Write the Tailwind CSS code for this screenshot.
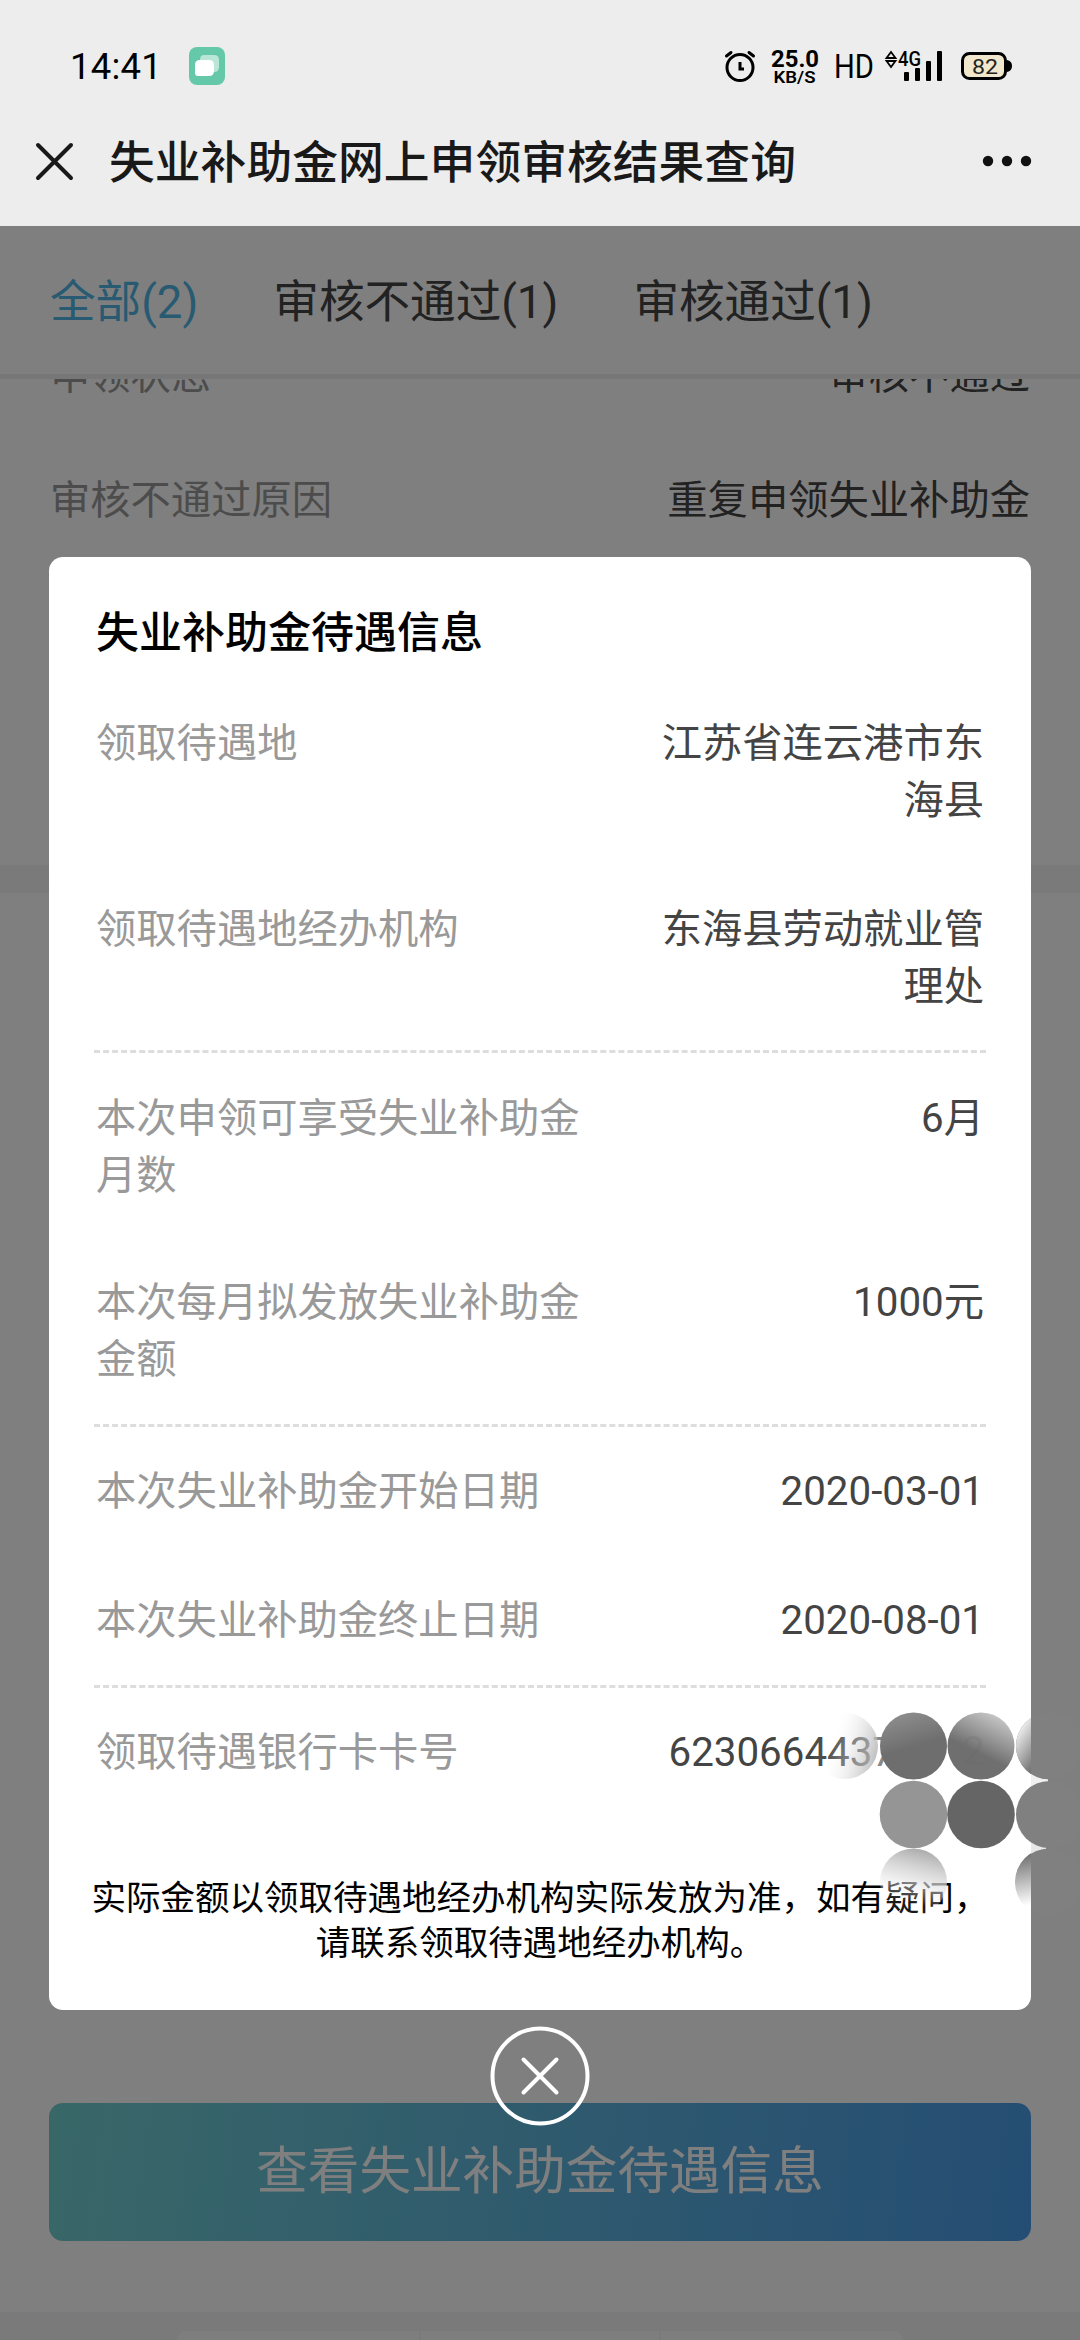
<!DOCTYPE html>
<html lang="zh-CN">
<head>
    <meta charset="UTF-8">
    <meta name="viewport" content="width=device-width, initial-scale=1.0">
    <title>失业补助金网上申领审核结果查询</title>
    <script src="https://cdn.jsdelivr.net/npm/@tailwindcss/browser@4"></script>
</head>
<body class="bg-white font-[Roboto,'Noto_Sans_CJK_SC',sans-serif]">
    <div class="w-[1080px] h-[2340px] flex flex-col overflow-hidden">
        <!-- Status bar + title bar -->
        <header class="h-[226px] shrink-0 bg-[#ededed]">
            <div class="h-[98px] pt-[34px] pl-[70px] pr-[64px] flex items-center justify-between">
                <div class="flex items-center">
                    <span class="w-[119px] pt-[2px] text-[36.5px] leading-[48px] tracking-[0.2px] text-black">14:41</span>
                    <svg class="w-[36px] h-[38px]" viewBox="0 0 36 38">
                        <rect width="36" height="38" rx="8" fill="#65c9a9"/>
                        <path d="M15 8h10q5 0 5 5v7q0 5-5 5H15q-4 0-4-4v-8q0-5 4-5z" fill="#b9e6d6"/>
                        <path d="M11 13h9q5 0 5 5v6q0 5-5 5H9q-3 0-3-3v-8q0-5 5-5z" fill="#fff"/>
                    </svg>
                </div>
                <svg class="w-[292px] h-[42px]" viewBox="724 45 292 42">
                    <g fill="none" stroke="#000" stroke-width="3" stroke-linecap="round">
                        <circle cx="740" cy="67.500" r="13"/>
                        <path d="M726.500 56l4.500-3.500M753.500 56l-4.500-3.500"/>
                        <path d="M740 62v7h4" stroke-linecap="butt"/>
                    </g>
                    <text x="771" y="66.500" font-size="24" font-weight="700" textLength="48" lengthAdjust="spacingAndGlyphs">25.0</text>
                    <text x="773.500" y="83" font-size="17" font-weight="600" textLength="42" lengthAdjust="spacingAndGlyphs">KB/S</text>
                    <text x="834" y="78" font-size="33" textLength="40" lengthAdjust="spacingAndGlyphs">HD</text>
                    <path d="M886.500 58h9l-4.500-6zM886.500 61h9l-4.500 6z" fill="none" stroke="#000" stroke-width="1.800"/>
                    <text x="898" y="66" font-size="20" font-weight="500" textLength="23" lengthAdjust="spacingAndGlyphs">4G</text>
                    <rect x="904" y="72" width="5" height="9" rx="1"/>
                    <rect x="915" y="68" width="5" height="13" rx="1"/>
                    <rect x="926" y="61" width="5" height="20" rx="1"/>
                    <rect x="937" y="51" width="5" height="30" rx="1"/>
                    <rect x="962.500" y="53.500" width="43" height="25" rx="7" fill="#f1e7cd" stroke="#000" stroke-width="3"/>
                    <path d="M1007 60q5 1 5 6t-5 6z"/>
                    <text x="972" y="73.500" font-size="21" textLength="26" lengthAdjust="spacingAndGlyphs" fill="#222">82</text>
                </svg>
            </div>
            <div class="h-[128px] pl-[34px] pr-[48px] pb-[3px] flex items-center">
                <svg class="w-[41px] h-[40px]" viewBox="0 0 41 40" fill="none" stroke="#191919" stroke-width="4" stroke-linecap="round">
                    <path d="M4 4l33 33M37 4L4 37"/>
                </svg>
                <h1 class="ml-[34px] pt-[7px] grow text-[45.8px] leading-[60px] font-medium text-[#191919]">失业补助金网上申领审核结果查询</h1>
                <svg class="w-[50px] h-[12px]" viewBox="0 0 50 12" fill="#111">
                    <circle cx="6" cy="6" r="5.200"/>
                    <circle cx="25" cy="6" r="5.200"/>
                    <circle cx="44" cy="6" r="5.200"/>
                </svg>
            </div>
        </header>

        <main class="relative grow flex flex-col bg-white">
            <nav class="h-[153px] shrink-0 border-b-[5px] border-[#eee] px-[50px] pt-[6px] flex items-center gap-[75px] text-[45.6px] leading-[60px] text-[#444]">
                <span class="text-[#50b4e4]">全部(2)</span>
                <span>审核不通过(1)</span>
                <span>审核通过(1)</span>
            </nav>
            <section class="h-[486px] shrink-0 overflow-hidden px-[50px] text-[40.3px] text-[#444]">
                <div class="-mt-[65px] h-[125px] flex items-center justify-between">
                    <span class="text-[#999]">申领状态</span>
                    <span>审核不通过</span>
                </div>
                <div class="h-[125px] flex items-center justify-between">
                    <span class="text-[#999]">审核不通过原因</span>
                    <span>重复申领失业补助金</span>
                </div>
            </section>
            <div class="h-[28px] shrink-0 bg-[#f4f4f4]"></div>
            <section class="grow px-[49px] pb-[71px] flex flex-col justify-end">
                <button class="h-[138px] rounded-[14px] bg-linear-[98deg,#72cfd0,#4a9be8] text-white text-[51.6px] leading-[70px] pb-px">查看失业补助金待遇信息</button>
            </section>
            <footer class="h-[28px] shrink-0 bg-[#f4f4f4] pt-[19px] px-[178px] flex gap-[2px]">
                <div class="w-[241px] bg-[#fdfdfd] rounded-tl-[8px]"></div>
                <div class="w-[238px] bg-[#fdfdfd]"></div>
                <div class="grow bg-[#fdfdfd] rounded-tr-[8px]"></div>
            </footer>

            <!-- Modal -->
            <div class="absolute inset-0 bg-black/50 pt-[331px] flex flex-col items-center">
                <div class="w-[982px] h-[1453px] shrink-0 rounded-[14px] bg-white px-[45px] pt-[46px] text-[40.3px] leading-[57px] text-[#444]">
                    <h2 class="px-[2px] h-[76px] text-[43px] leading-[60px] font-medium text-black">失业补助金待遇信息</h2>
                    <div class="px-[2px] py-[36px] flex justify-between">
                        <span class="text-[#999]">领取待遇地</span>
                        <span class="text-right">江苏省连云港市东<br>海县</span>
                    </div>
                    <div class="px-[2px] pt-[36px] pb-[35px] flex justify-between">
                        <span class="text-[#999]">领取待遇地经办机构</span>
                        <span class="text-right">东海县劳动就业管<br>理处</span>
                    </div>
                    <div class="border-t-[3px] border-dashed border-[#ddd]"></div>
                    <div class="px-[2px] pt-[37px] pb-[35px] flex justify-between">
                        <span class="text-[#999]">本次申领可享受失业补助金<br>月数</span>
                        <span>6月</span>
                    </div>
                    <div class="px-[2px] pt-[35px] pb-[36px] flex justify-between">
                        <span class="text-[#999]">本次每月拟发放失业补助金<br>金额</span>
                        <span>1000元</span>
                    </div>
                    <div class="border-t-[3px] border-dashed border-[#ddd]"></div>
                    <div class="px-[2px] py-[36px] flex justify-between">
                        <span class="text-[#999]">本次失业补助金开始日期</span>
                        <span>2020-03-01</span>
                    </div>
                    <div class="px-[2px] pt-[36px] pb-[36px] flex justify-between">
                        <span class="text-[#999]">本次失业补助金终止日期</span>
                        <span>2020-08-01</span>
                    </div>
                    <div class="border-t-[3px] border-dashed border-[#ddd]"></div>
                    <div class="px-[2px] pt-[36px] pb-[36px] flex justify-between">
                        <span class="text-[#999]">领取待遇银行卡卡号</span>
                        <span class="pr-[89px]">623066443<span class="text-[#888]">7</span></span>
                    </div>
                    <p class="-mx-[5px] pt-[59px] text-center text-[34.5px] leading-[45px] text-black">实际金额以领取待遇地经办机构实际发放为准，如有疑问，<br>请联系领取待遇地经办机构。</p>
                </div>
                <svg class="w-[100px] h-[100px] mt-[16px]" viewBox="0 0 100 100" fill="none" stroke="#fff" stroke-linecap="round">
                    <circle cx="50" cy="50" r="47.500" stroke-width="4"/>
                    <path d="M33.500 33.500l33 33M66.500 33.500l-33 33" stroke-width="4"/>
                </svg>
            </div>

            <!-- Mosaic dots over the card number -->
            <svg class="absolute left-[800px] top-[1474px] w-[280px] h-[230px]" viewBox="800 1700 280 230">
                <defs>
                    <linearGradient id="d1" x1="0.300" y1="0.400" x2="1" y2="0.600"><stop offset="0" stop-color="#fff" stop-opacity="0.050"/><stop offset="1" stop-color="#b4b4b4" stop-opacity="0.850"/></linearGradient>
                    <linearGradient id="d2" x1="0.400" y1="0" x2="0.550" y2="0.500"><stop offset="0" stop-color="#8c8c8c"/><stop offset="1" stop-color="#6e6e6e"/></linearGradient>
                    <linearGradient id="d3" x1="0.750" y1="0" x2="0.450" y2="0.600"><stop offset="0" stop-color="#ccc"/><stop offset="1" stop-color="#6f6f6f"/></linearGradient>
                    <linearGradient id="d4" x1="0" y1="0.200" x2="0.450" y2="0.500"><stop offset="0" stop-color="#fff"/><stop offset="1" stop-color="#777"/></linearGradient>
                    <linearGradient id="d6" x1="0" y1="0.100" x2="0.150" y2="0.850"><stop offset="0" stop-color="#6c6c6c"/><stop offset="1" stop-color="#fff"/></linearGradient>
                    <linearGradient id="d7" x1="0.600" y1="0" x2="0.400" y2="0.800"><stop offset="0" stop-color="#aaa"/><stop offset="0.550" stop-color="#ddd" stop-opacity="0.700"/><stop offset="1" stop-color="#fff" stop-opacity="0.100"/></linearGradient>
                    <clipPath id="card"><rect x="800" y="1700" width="231" height="230"/></clipPath>
                </defs>
                <rect x="1031" y="1768" width="17" height="22" fill="#f0f0f0"/>
                <rect x="1031" y="1838" width="15" height="20" fill="#e8e8e8"/>
                <g fill="#808080">
                    <circle cx="1049.500" cy="1746" r="33.500"/>
                    <circle cx="1049.500" cy="1814.500" r="33.500"/>
                    <circle cx="1049" cy="1882" r="33.500"/>
                </g>
                <g clip-path="url(#card)">
                    <circle cx="1049.500" cy="1746" r="33.500" fill="url(#d4)"/>
                    <circle cx="1049" cy="1882" r="34" fill="url(#d6)"/>
                </g>
                <circle cx="845" cy="1746" r="33" fill="url(#d1)"/>
                <circle cx="913.500" cy="1746" r="33.500" fill="url(#d2)"/>
                <circle cx="981" cy="1746" r="33.500" fill="url(#d3)"/>
                <text x="962" y="1765" font-size="40" fill="#666" fill-opacity="0.200">2</text>
                <circle cx="913.500" cy="1814.500" r="33.800" fill="#959595"/>
                <circle cx="981" cy="1814.500" r="33.800" fill="#656565"/>
                <circle cx="913.500" cy="1882" r="33.500" fill="url(#d7)"/>
            </svg>
        </main>
    </div>
</body>
</html>
